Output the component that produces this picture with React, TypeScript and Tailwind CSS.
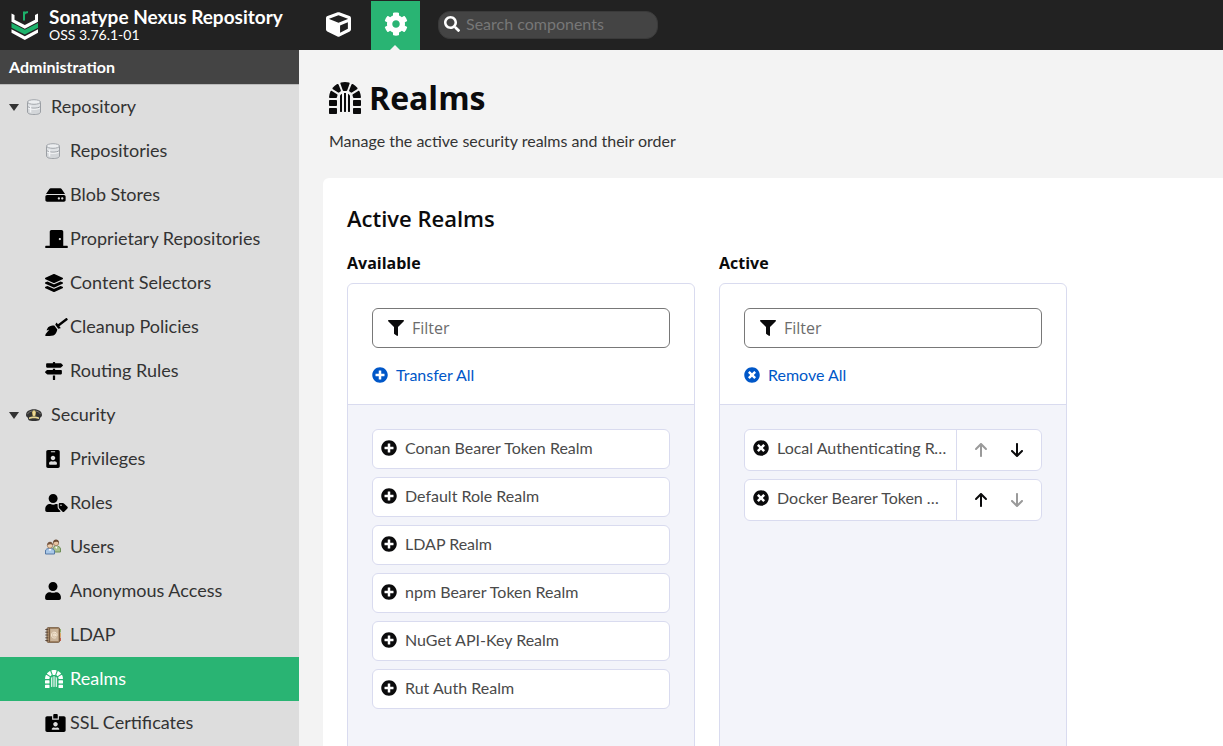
import React, { type ReactNode } from "react";
import type { IconType } from "react-icons";
import {
  FaBroom,
  FaCog,
  FaCube,
  FaDoorClosed,
  FaDungeon,
  FaFilter,
  FaHdd,
  FaIdBadge,
  FaIdCardAlt,
  FaLayerGroup,
  FaMapSigns,
  FaPlusCircle,
  FaSearch,
  FaTimesCircle,
  FaUser,
  FaUserTag,
} from "react-icons/fa";
import { FaArrowDown, FaArrowUp } from "react-icons/fa6";

function NexusLogo() {
  return (
    <svg viewBox="0 0 28 32" className="h-8 w-7 shrink-0" aria-hidden="true">
      <path d="M.5 4.500l3 1.500v4.800l10.300 5.300 10.200-5.300V6l3-1.500v8.200l-13.200 7L.5 12.700z" fill="#fff" />
      <path d="M.5 14l13.300 6.800L27 14v4.800l-13.200 6.700L.5 18.800z" fill="#1db26b" />
      <path d="M.5 20.200l13.300 7L27 20.200v3.600L13.800 31 .5 23.800z" fill="#fff" />
      <path d="M13 11.500V2.500M13 5.500c.5-1.700 1.800-2.500 4-2.200" fill="none" stroke="#1db26b" strokeWidth="2" />
    </svg>
  );
}

function DatabaseIcon() {
  return (
    <svg viewBox="0 0 16 16" className="h-4 w-4" aria-hidden="true">
      <path d="M1.500 3v10c0 1.600 2.900 2.600 6.500 2.600s6.500-1 6.500-2.600V3z" fill="#d3d6d9" stroke="#9b9fa4" />
      <path d="M2 4v4.500c1 2 11 2 12 0V4z" fill="#dfe2e5" />
      <ellipse cx="8" cy="3" rx="6.500" ry="2.300" fill="#eceef0" stroke="#a3a7ac" />
      <path d="M2 7.700c1.500 1.900 10.500 1.900 12 0" fill="none" stroke="#9b9fa4" />
      <path d="M2 8.900c1.500 1.900 10.500 1.900 12 0" fill="none" stroke="#f7f8f9" />
      <path d="M4.500 6.500v7" stroke="#f1f3f5" strokeWidth="1.500" />
    </svg>
  );
}

function CapIcon() {
  return (
    <svg viewBox="0 0 16 16" className="h-4 w-4" aria-hidden="true">
      <path d="M0 8c0-3.500 3.500-5.700 8-5.700S16 4.500 16 8c0 1.500-1.200 2.200-1.800 2.700L13.500 13c-1.500 1.300-9.500 1.300-11 0l-.7-2.300C1.200 10.200 0 9.500 0 8z" fill="#343434" />
      <path d="M1.500 7.200c1.500-4.400 11.500-4.400 13 0" fill="none" stroke="#7a7872" />
      <path d="M3 10.500c2.500-1.200 7.500-1.200 10 0V12c-2.500-1-7.500-1-10 0z" fill="#e8d794" />
      <path d="M8 3l2 1.900-.5 3.600L8 9.700 6.500 8.500 6 4.900z" fill="#d8bd68" />
      <path d="M8 4.200v4.300" stroke="#f8edbd" strokeWidth="1.200" />
    </svg>
  );
}

function UsersIcon() {
  return (
    <svg viewBox="0 0 16 16" className="h-4 w-4" aria-hidden="true">
      <path d="M8 13V9.500c0-1.500 1.300-2.500 3-2.500s4.500.7 4.500 3V13z" fill="#a9c08c" stroke="#6f8f57" />
      <path d="M10 7.500l1.300 2.500 1.300-2.500z" fill="#fff" />
      <circle cx="11" cy="4" r="2.700" fill="#e8c5a2" stroke="#8b6a4d" strokeWidth=".7" />
      <path d="M8.200 4C8 1.500 9.500.5 11 .5s3.200 1 2.800 3.500c-1-1.500-3.500-1.800-5.600 0z" fill="#6b4c35" />
      <path d="M.5 15v-3c0-1.700 1.500-2.500 4.300-2.500S9.500 10.300 9.500 12v3z" fill="#a9c8e8" stroke="#5679a5" />
      <path d="M3.500 9.800L5 12.300l1.500-2.500z" fill="#fff" />
      <circle cx="5" cy="6.500" r="2.700" fill="#efcfae" stroke="#8b6a4d" strokeWidth=".7" />
      <path d="M2.200 6.500C2 4 3.500 2.800 5 2.800S8.200 4 7.800 6.500c-1-1.500-3.500-1.800-5.600 0z" fill="#765640" />
    </svg>
  );
}

function BookIcon() {
  return (
    <svg viewBox="0 0 16 16" className="h-4 w-4" aria-hidden="true">
      <rect x="14" y="2" width="2" height="3.500" fill="#8fae69" />
      <rect x="14" y="6" width="2" height="4" fill="#d9a867" />
      <rect x="14" y="10.500" width="2" height="3.500" fill="#c0604b" />
      <rect x="2" y=".7" width="12.500" height="14.600" rx="1" fill="#a98a68" stroke="#755a41" />
      <rect x="5.300" y="2" width="8" height="12" fill="#cbb59b" />
      <path d="M4.500 1v14" stroke="#755a41" />
      <path d="M.3 2.500h3M.3 5.200h3M.3 8h3M.3 10.800h3M.3 13.500h3" stroke="#5b483a" />
      <path d="M11.200 10.500c-1 .8-4.700 1-4.700-2.500 0-3.700 5.500-3.700 5.500-.3 0 2-1.800 2-1.800.4V6.500m0 1.500c0 1.700-2.200 1.700-2.200 0s2.200-1.700 2.200 0" fill="none" stroke="#fff3df" strokeWidth=".8" />
    </svg>
  );
}

const fa = (Icon: IconType, size: string) => <Icon className={size} aria-hidden="true" />;

type NavEntry = { label: string; icon: ReactNode; active?: boolean };

const repositoryItems: NavEntry[] = [
  { label: "Repositories", icon: <DatabaseIcon /> },
  { label: "Blob Stores", icon: fa(FaHdd, "h-[18px] w-[21px]") },
  { label: "Proprietary Repositories", icon: fa(FaDoorClosed, "h-[18px] w-[23px]") },
  { label: "Content Selectors", icon: fa(FaLayerGroup, "h-[18px] w-[18px]") },
  { label: "Cleanup Policies", icon: fa(FaBroom, "h-[18px] w-[23px]") },
  { label: "Routing Rules", icon: fa(FaMapSigns, "h-[18px] w-[18px]") },
];

const securityItems: NavEntry[] = [
  { label: "Privileges", icon: fa(FaIdBadge, "h-[18px] w-4") },
  { label: "Roles", icon: fa(FaUserTag, "h-[18px] w-[23px]") },
  { label: "Users", icon: <UsersIcon /> },
  { label: "Anonymous Access", icon: fa(FaUser, "h-[18px] w-4") },
  { label: "LDAP", icon: <BookIcon /> },
  { label: "Realms", icon: fa(FaDungeon, "h-[18px] w-[18px]"), active: true },
  { label: "SSL Certificates", icon: fa(FaIdCardAlt, "h-[18px] w-[21px]") },
];

function NavSection({ label, icon, items }: { label: string; icon: ReactNode; items: NavEntry[] }) {
  return (
    <li>
      <button type="button" aria-expanded="true" className="flex h-11 w-full items-center pl-[9px] text-left">
        <svg viewBox="0 0 10 7" className="mr-[7px] h-[7px] w-[10px]" aria-hidden="true">
          <path d="M0 0h10L5 7z" fill="#333" />
        </svg>
        {icon}
        <span className="ml-[9px] pb-0.5">{label}</span>
      </button>
      <ul>
        {items.map((item) => (
          <li key={item.label}>
            <a
              href="#"
              aria-current={item.active ? "page" : undefined}
              className={
                item.active
                  ? "flex h-11 items-center bg-[#29b473] pl-[45px] text-white"
                  : "flex h-11 items-center pl-[45px]"
              }
            >
              <span className={item.active ? "w-[25px] shrink-0 text-white" : "w-[25px] shrink-0 text-black"}>
                {item.icon}
              </span>
              <span className="pb-0.5 whitespace-nowrap">{item.label}</span>
            </a>
          </li>
        ))}
      </ul>
    </li>
  );
}

function TransferColumn({
  title,
  action,
  actionIcon,
  children,
}: {
  title: string;
  action: string;
  actionIcon: ReactNode;
  children: ReactNode;
}) {
  const id = `filter-${title.toLowerCase()}`;
  return (
    <section className="flex w-[348px] flex-col">
      <h3 className="mb-2 font-['Open_Sans',sans-serif] text-base leading-6 font-bold text-[#0b0b0c]">{title}</h3>
      <div className="flex grow flex-col overflow-hidden rounded-md border border-[#d9dbef]">
        <div className="border-b border-[#d9dbef] px-6 pt-6 pb-2">
          <label
            htmlFor={id}
            className="flex h-10 items-center rounded-md border border-[#787878] px-[15px] text-[#0b0b0c]"
          >
            <FaFilter className="h-4 w-4" aria-hidden="true" />
            <input
              id={id}
              type="text"
              placeholder="Filter"
              aria-label={`Filter ${title.toLowerCase()} realms`}
              className="ml-2 min-w-0 grow font-['Open_Sans',sans-serif] text-base outline-none placeholder:text-[#6c6c6c]"
            />
          </label>
          <button type="button" className="mt-2 flex h-10 items-center gap-2 pb-0.5 text-[#0057c8]">
            {actionIcon}
            {action}
          </button>
        </div>
        <ul className="flex min-h-[400px] grow flex-col gap-2 bg-[#f3f4fa] p-6">{children}</ul>
      </div>
    </section>
  );
}

const available = [
  "Conan Bearer Token Realm",
  "Default Role Realm",
  "LDAP Realm",
  "npm Bearer Token Realm",
  "NuGet API-Key Realm",
  "Rut Auth Realm",
];

const active = ["Local Authenticating Realm", "Docker Bearer Token Realm"];

export default function App() {
  return (
    <div className="flex h-screen flex-col overflow-hidden bg-[#f3f3f3] font-[Lato,sans-serif] text-[#333]">
      <header className="flex h-[50px] shrink-0 items-center bg-[#222] text-white">
        <div className="flex w-[314px] shrink-0 items-center gap-2.5 pl-[11px]">
          <NexusLogo />
          <div>
            <div className="text-[19px] leading-5 font-bold whitespace-nowrap">Sonatype Nexus Repository</div>
            <div className="text-sm leading-4">OSS 3.76.1-01</div>
          </div>
        </div>
        <button type="button" aria-label="Browse" className="flex h-full w-[49px] items-center justify-center pb-0.5">
          <FaCube className="h-[25px] w-[25px]" aria-hidden="true" />
        </button>
        <button
          type="button"
          aria-label="Administration"
          className="relative ml-2 flex h-[49px] w-[49px] items-center justify-center self-end bg-[#29b473] pb-[3px]"
        >
          <FaCog className="h-6 w-6" aria-hidden="true" />
          <svg viewBox="0 0 10 5" className="absolute bottom-0 left-[19px] h-[5px] w-[10px]" aria-hidden="true">
            <path d="M0 5l5-5 5 5z" fill="#f3f3f3" />
          </svg>
        </button>
        <label className="ml-[18px] flex h-7 w-[220px] items-center gap-1.5 rounded-xl border border-[#3a3a3a] bg-[#444] px-[5px] pb-0.5">
          <FaSearch className="h-4 w-4 shrink-0" aria-hidden="true" />
          <input
            type="search"
            aria-label="Search components"
            placeholder="Search components"
            className="min-w-0 grow text-base outline-none placeholder:text-[#777]"
          />
        </label>
      </header>

      <div className="flex min-h-0 grow">
        <nav aria-label="Administration" className="w-[299px] shrink-0 overflow-hidden bg-[#ddd] text-lg">
          <h2 className="flex h-[35px] items-center border-b border-[#bbb] bg-[#444] pl-[9px] text-base font-bold text-white">
            Administration
          </h2>
          <ul>
            <NavSection label="Repository" icon={<DatabaseIcon />} items={repositoryItems} />
            <NavSection label="Security" icon={<CapIcon />} items={securityItems} />
          </ul>
        </nav>

        <main className="flex min-w-0 grow flex-col overflow-hidden pl-6 text-base">
          <div className="px-1.5 pt-6 pb-[25px]">
            <h1 className="flex h-12 items-center gap-2 font-['Open_Sans',sans-serif] text-[32px] font-bold text-[#0b0b0c]">
              <FaDungeon className="h-8 w-8" aria-hidden="true" />
              Realms
            </h1>
            <p className="mt-[7px] leading-6">Manage the active security realms and their order</p>
          </div>
          <div className="flex grow flex-col rounded-tl-md bg-white px-6 pt-6">
            <h2 className="mb-[17px] font-['Open_Sans',sans-serif] text-[22px] leading-8 font-semibold text-[#0b0b0c]">
              Active Realms
            </h2>
            <div className="flex grow gap-6">
              <TransferColumn title="Available" action="Transfer All" actionIcon={<FaPlusCircle aria-hidden="true" />}>
                {available.map((name) => (
                  <li key={name}>
                    <button
                      type="button"
                      className="flex h-10 w-full items-center gap-2 rounded-md border border-[#d9dbef] bg-white px-2 pb-0.5 text-left text-[#4a4a4a]"
                    >
                      <FaPlusCircle className="shrink-0 text-[#0b0b0c]" aria-hidden="true" />
                      <span className="truncate">{name}</span>
                    </button>
                  </li>
                ))}
              </TransferColumn>
              <TransferColumn title="Active" action="Remove All" actionIcon={<FaTimesCircle aria-hidden="true" />}>
                {active.map((name, i) => (
                  <li key={name} className="flex h-[42px] rounded-md border border-[#d9dbef] bg-white">
                    <button
                      type="button"
                      className="flex min-w-0 grow items-center gap-2 pr-2 pb-1 pl-2 text-left text-[#4a4a4a]"
                    >
                      <FaTimesCircle className="shrink-0 text-[#0b0b0c]" aria-hidden="true" />
                      <span className="truncate">{name}</span>
                    </button>
                    <div className="flex w-[85px] shrink-0 items-center justify-center gap-5 border-l border-[#d9dbef] text-[#0b0b0c]">
                      <button type="button" aria-label={`Move ${name} up`} disabled={i === 0} className="disabled:text-[#9a9a9a]">
                        <FaArrowUp aria-hidden="true" />
                      </button>
                      <button
                        type="button"
                        aria-label={`Move ${name} down`}
                        disabled={i === active.length - 1}
                        className="disabled:text-[#9a9a9a]"
                      >
                        <FaArrowDown aria-hidden="true" />
                      </button>
                    </div>
                  </li>
                ))}
              </TransferColumn>
            </div>
          </div>
        </main>
      </div>
    </div>
  );
}
